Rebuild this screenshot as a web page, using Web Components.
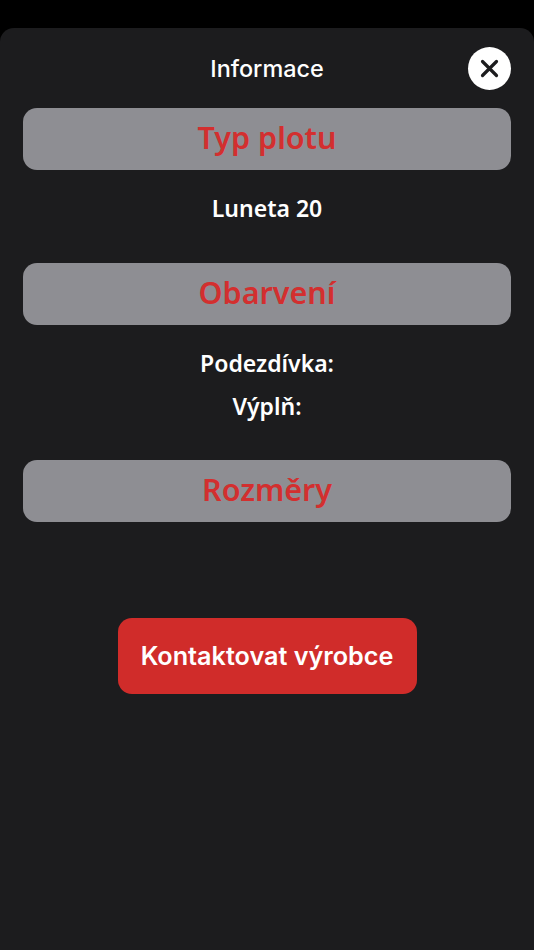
<!DOCTYPE html>
<html lang="cs">
<head>
<meta charset="utf-8">
<title>Informace</title>
<style>
html, body { margin: 0; height: 100%; background: #000; }
body { font-family: "Noto Sans", sans-serif; overflow: hidden; }
</style>
</head>
<body>
<info-sheet heading="Informace">
    <section-bar>Typ plotu</section-bar>
    <info-text style="margin-top: 23px">Luneta 20</info-text>
    <section-bar style="margin-top: 40px">Obarvení</section-bar>
    <info-text style="margin-top: 23px">Podezdívka:</info-text>
    <info-text style="margin-top: 13px">Výplň:</info-text>
    <section-bar style="margin-top: 39px; height: 61.5px">Rozměry</section-bar>
    <contact-button style="margin-top: 96.5px">Kontaktovat výrobce</contact-button>
</info-sheet>
<script>
'use strict';

customElements.define('info-sheet', class extends HTMLElement {
    constructor() {
        super();
        this.attachShadow({ mode: 'open' });
    }

    connectedCallback() {
        this.shadowRoot.innerHTML = `
            <style>
                :host { display: block; box-sizing: border-box; height: 922px; margin-top: 28px; padding: 0 23px; background: #1c1c1e; border-radius: 14px 14px 0 0; color: #fff; }
                header { position: relative; display: flex; justify-content: center; align-items: center; height: 80px; font-family: Inter, sans-serif; font-size: 23.4px; font-weight: 500; }
                close-button { position: absolute; right: 0; top: 19px; }
            </style>
            <header><span>${this.getAttribute('heading')}</span><close-button></close-button></header>
            <slot></slot>`;
    }
});

customElements.define('close-button', class extends HTMLElement {
    constructor() {
        super();
        this.attachShadow({ mode: 'open' });
        this.shadowRoot.innerHTML = `
            <style>
                :host { display: flex; align-items: center; justify-content: center; width: 43px; height: 43px; border-radius: 50%; background: #fff; }
            </style>
            <svg width="21" height="21" viewBox="0 0 21 21"><path d="M3.5 3.5L17.5 17.5M17.5 3.5L3.5 17.5" stroke="#1c1c1e" stroke-width="3.2" stroke-linecap="round"/></svg>`;
    }
});

customElements.define('section-bar', class extends HTMLElement {
    constructor() {
        super();
        this.attachShadow({ mode: 'open' });
        this.shadowRoot.innerHTML = `
            <style>
                :host { display: flex; align-items: center; justify-content: center; height: 62px; border-radius: 14px; background: #8e8e93; color: #d32f2f; font-size: 30.5px; font-weight: 600; line-height: 58px; }
                span { display: block; margin-top: -4px; }
            </style>
            <span><slot></slot></span>`;
    }
});

customElements.define('info-text', class extends HTMLElement {
    constructor() {
        super();
        this.attachShadow({ mode: 'open' });
        this.shadowRoot.innerHTML = `
            <style>
                :host { display: block; text-align: center; color: #fff; font-size: 23px; font-weight: 600; line-height: 30px; }
            </style>
            <slot></slot>`;
    }
});

customElements.define('contact-button', class extends HTMLElement {
    constructor() {
        super();
        this.attachShadow({ mode: 'open' });
        this.shadowRoot.innerHTML = `
            <style>
                :host { display: flex; align-items: center; justify-content: center; box-sizing: border-box; width: 299px; height: 76px; margin-left: auto; margin-right: auto; border-radius: 14px; background: #d02c2a; color: #fff; font-family: Inter, sans-serif; font-size: 25.2px; font-weight: 600; }
            </style>
            <slot></slot>`;
    }
});
</script>
</body>
</html>
